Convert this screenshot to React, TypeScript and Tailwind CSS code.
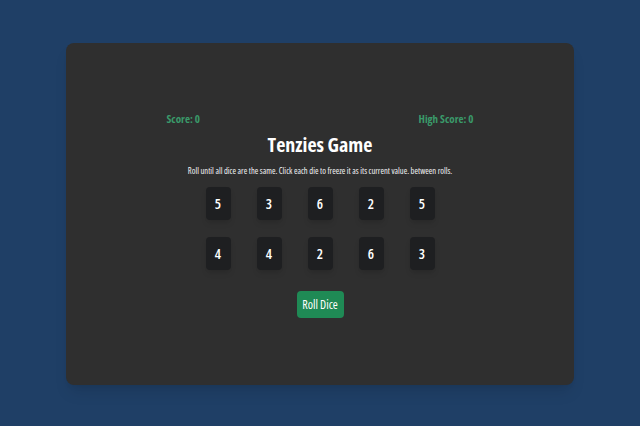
const dice = [5, 3, 6, 2, 5, 4, 4, 2, 6, 3];

export default function App() {
  return (
    <div className="flex h-screen w-full items-center justify-center bg-[#1f3f66] px-[66px] pt-[43px] pb-[41px] font-['Open_Sans',sans-serif] font-stretch-condensed">
      <main className="flex h-full w-full flex-col items-center rounded-lg bg-[#2f2f2f] pt-[69px] shadow-lg">
        <div className="flex w-[307px] justify-between text-[11px] font-bold leading-[14px] text-[#3a9a6a]">
          <span>Score: 0</span>
          <span>High Score: 0</span>
        </div>
        <h1 className="mt-[6px] text-[20px] font-bold leading-[25px] text-white">Tenzies Game</h1>
        <p className="mt-[8px] text-[8.5px] leading-[12px] text-gray-100">
          Roll until all dice are the same. Click each die to freeze it as its current value. between rolls.
        </p>
        <div className="mt-[10px] grid grid-cols-5 gap-x-[26px] gap-y-[17px]">
          {dice.map((d, i) => (
            <button
              key={i}
              className="flex h-[33px] w-[25px] items-center justify-center rounded-[4px] bg-[#1e1f21] text-[14px] font-semibold text-white shadow-md"
            >
              {d}
            </button>
          ))}
        </div>
        <button className="mt-[21px] h-[27px] w-[47px] rounded-[4px] bg-[#1f8a55] text-[12px] text-white">
          Roll Dice
        </button>
      </main>
    </div>
  );
}
